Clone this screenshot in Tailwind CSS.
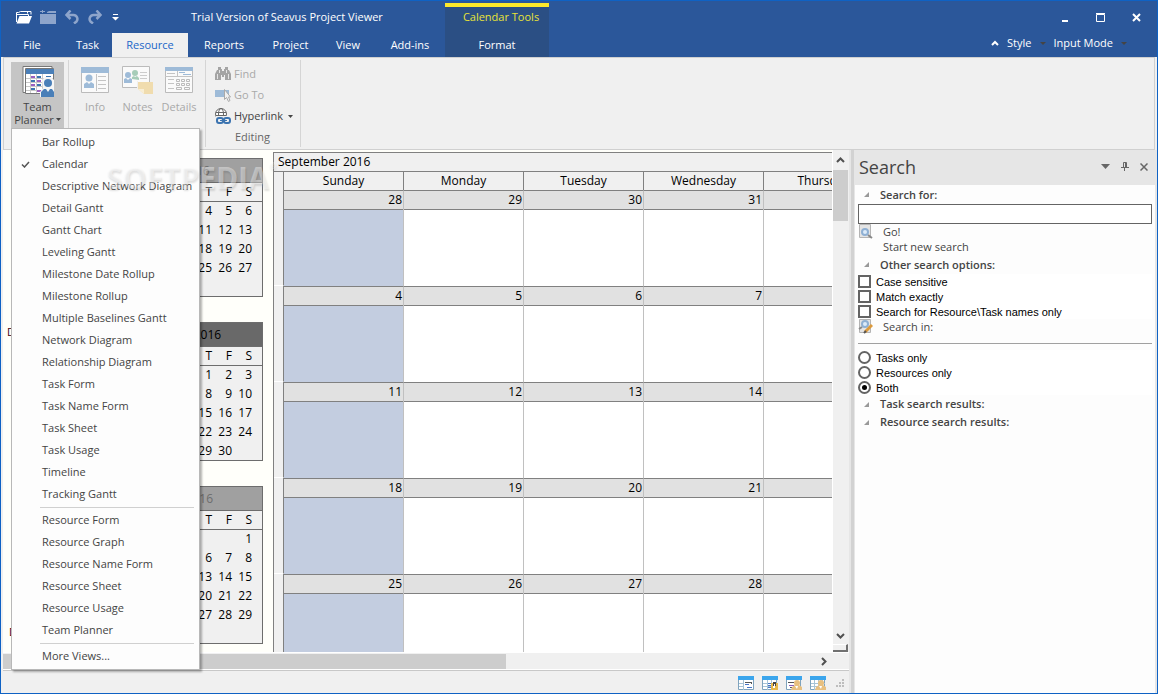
<!DOCTYPE html>
<html lang="en">
<head>
  <meta charset="UTF-8">
  <meta name="viewport" content="width=device-width, initial-scale=1.0">
  <title>Trial Version of Seavus Project Viewer</title>
  <script src="https://cdn.jsdelivr.net/npm/@tailwindcss/browser@4"></script>
</head>
<body class="h-screen flex flex-col overflow-hidden border border-[#0f62c4] bg-[#f0f0f0] font-['Open_Sans','Noto_Sans',sans-serif] text-[11px] leading-4 text-[#444]">

  <!-- Title bar and tabs -->
  <header class="flex h-14 shrink-0 bg-[#2b579a] text-white">
    <div class="flex flex-col w-[444px] shrink-0">
      <div class="flex items-center h-8">
        <div class="flex items-center w-[190px] pl-[15px] gap-2">
          <button aria-label="Open">
            <svg class="block" width="16" height="14" viewBox="0 0 16 14"><path d="M.5 12V2.500h2l2-1h7v2M.5 12V4.500h12v2M10 1.500h5v3" fill="none" stroke="#fff"/><path d="M3.500 6H16L13 13.500H.5z" fill="#fff"/></svg>
          </button>
          <button aria-label="Close file">
            <svg class="block" width="16" height="14" viewBox="0 0 16 14"><path d="M0 4h16v10H0zM7 2l2-1h7v2H7zM2 0h1v1h2v1H3v1H2V2H0V1h2z" fill="#8ea5cb"/></svg>
          </button>
          <button aria-label="Undo">
            <svg class="block" width="16" height="14" viewBox="0 0 16 14"><path d="M2 5h7.500a4 4 0 0 1 3 6.500L10 13.500M6.500 .5L2.500 5l4 4" fill="none" stroke="#8ea5cb" stroke-width="2.500"/></svg>
          </button>
          <button aria-label="Redo">
            <svg class="block" width="16" height="14" viewBox="0 0 16 14"><path d="M13 5H5.500a4 4 0 0 0-3 6.500L5 13.500M8.500 .5l4 4.500-4 4" fill="none" stroke="#8ea5cb" stroke-width="2.500"/></svg>
          </button>
          <button aria-label="Customize toolbar">
            <svg class="block" width="7" height="7" viewBox="0 0 7 7"><path d="M1 0h5v1H1zM0 3h7L3.500 6.500z" fill="#fff"/></svg>
          </button>
        </div>
        <h1>Trial Version of Seavus Project Viewer</h1>
      </div>
      <nav class="flex flex-1">
        <button class="w-[62px]">File</button>
        <button class="w-[49px]">Task</button>
        <button class="w-[76px] bg-[#f0f0f0] text-[#1a66c8]">Resource</button>
        <button class="w-[72px]">Reports</button>
        <button class="w-[61px]">Project</button>
        <button class="w-[54px]">View</button>
        <button class="w-[70px]">Add-ins</button>
      </nav>
    </div>
    <div class="flex flex-col justify-between w-[104px] shrink-0 mt-0.5 bg-[#2b4f84] border-t-4 border-[#fde92b]">
      <div class="h-5 pl-2 flex items-center justify-center text-[#e8e337]">Calendar Tools</div>
      <button class="h-6">Format</button>
    </div>
    <div class="flex flex-col flex-1">
      <div class="flex items-center justify-end h-8 pr-4 gap-[27px]">
        <button aria-label="Minimize"><svg class="block" width="9" height="9"><path d="M2 7h6v2H2z" fill="#fff"/></svg></button>
        <button aria-label="Maximize"><svg class="block" width="9" height="9"><path d="M.5 1.500h8v7h-8zM0 .5h9" fill="none" stroke="#fff"/></svg></button>
        <button aria-label="Close"><svg class="block" width="9" height="9"><path d="M1 1l7 7M8 1L1 8" stroke="#fff" stroke-width="2"/></svg></button>
      </div>
      <div class="flex items-center justify-end h-5 pr-[30px] gap-2">
        <button aria-label="Collapse ribbon"><svg class="block" width="8" height="6"><path d="M1 5l3-3 3 3" fill="none" stroke="#fff" stroke-width="2"/></svg></button>
        <button class="flex items-center gap-2">Style <svg width="6" height="3"><path d="M0 0h6L3 3z" fill="#444"/></svg></button>
        <button class="flex items-center gap-2">Input Mode <svg width="6" height="3"><path d="M0 0h6L3 3z" fill="#444"/></svg></button>
      </div>
    </div>
  </header>

  <!-- Ribbon -->
  <section class="flex h-[93px] shrink-0 mx-[2px] border border-[#d0d0d0] py-[2px]">
    <div class="relative w-[65px] pl-[7px] pt-[2px] border-r border-[#d5d5d5]">
      <button class="flex flex-col items-center w-[53px] h-[67px] pt-1 bg-[#c5c5c5] leading-[13px]">
        <svg class="block mb-[3px]" width="32" height="31" viewBox="0 0 32 31">
          <path d="M1 .5h29v26H1z" fill="#fff" stroke="#777"/>
          <path d="M3.500 2.500h28v25h-28z" fill="#fff" stroke="#777"/>
          <path d="M4 3h28v5H4z" fill="#4a7fb8"/>
          <path d="M4 12.500h27M4 16.500h27M4 20.500h27M4 24.500h27M8.500 8v19M14.500 8v19M20.500 8v19" stroke="#c8c8c8"/>
          <path d="M9 10h4v2H9zM15 14h4v2h-4zM9 18h4v2H9zM15 24h4v2h-4z" fill="#9a5fc0"/>
          <path d="M15 10h4v2h-4zM24 10h5v2h-5zM9 14h4v2H9zM15 18h4v2h-4zM9 22h4v2H9z" fill="#3c74b0"/>
          <path d="M20 14l3-3h6l3 3v17H18v-5l3-4z" fill="#f6f6f6"/>
          <circle cx="26" cy="17" r="4" fill="#4a7fb8"/>
          <path d="M19 31v-5l3-3h2l2 3 2-3h2l2 3v5z" fill="#4a7fb8"/>
        </svg>
        <span>Team</span>
        <span class="flex items-center gap-0.5">Planner <svg width="5" height="3"><path d="M0 0h5L2.500 3z" fill="#444"/></svg></span>
      </button>

      <!-- View list -->
      <div role="menu" class="absolute z-10 left-[7px] top-[68px] w-[189px] py-[2px] bg-[#fdfdfd] border border-[#b8b8b8] shadow-[2px_2px_2px_rgba(0,0,0,0.3)]">
        <button role="menuitem" class="block w-full h-[22px] pl-[30px] text-left whitespace-nowrap">Bar Rollup</button>
        <button role="menuitem" class="flex items-center w-full h-[22px] pl-[9px] text-left whitespace-nowrap"><svg class="mr-[12px]" width="9" height="7"><path d="M1 3.500l2.500 2.500L8 1" fill="none" stroke="#555" stroke-width="1.500"/></svg>Calendar</button>
        <button role="menuitem" class="block w-full h-[22px] pl-[30px] text-left whitespace-nowrap">Descriptive Network Diagram</button>
        <button role="menuitem" class="block w-full h-[22px] pl-[30px] text-left whitespace-nowrap">Detail Gantt</button>
        <button role="menuitem" class="block w-full h-[22px] pl-[30px] text-left whitespace-nowrap">Gantt Chart</button>
        <button role="menuitem" class="block w-full h-[22px] pl-[30px] text-left whitespace-nowrap">Leveling Gantt</button>
        <button role="menuitem" class="block w-full h-[22px] pl-[30px] text-left whitespace-nowrap">Milestone Date Rollup</button>
        <button role="menuitem" class="block w-full h-[22px] pl-[30px] text-left whitespace-nowrap">Milestone Rollup</button>
        <button role="menuitem" class="block w-full h-[22px] pl-[30px] text-left whitespace-nowrap">Multiple Baselines Gantt</button>
        <button role="menuitem" class="block w-full h-[22px] pl-[30px] text-left whitespace-nowrap">Network Diagram</button>
        <button role="menuitem" class="block w-full h-[22px] pl-[30px] text-left whitespace-nowrap">Relationship Diagram</button>
        <button role="menuitem" class="block w-full h-[22px] pl-[30px] text-left whitespace-nowrap">Task Form</button>
        <button role="menuitem" class="block w-full h-[22px] pl-[30px] text-left whitespace-nowrap">Task Name Form</button>
        <button role="menuitem" class="block w-full h-[22px] pl-[30px] text-left whitespace-nowrap">Task Sheet</button>
        <button role="menuitem" class="block w-full h-[22px] pl-[30px] text-left whitespace-nowrap">Task Usage</button>
        <button role="menuitem" class="block w-full h-[22px] pl-[30px] text-left whitespace-nowrap">Timeline</button>
        <button role="menuitem" class="block w-full h-[22px] pl-[30px] text-left whitespace-nowrap">Tracking Gantt</button>
        <hr class="ml-7 mr-[5px] mt-[2px] mb-[1px] border-[#d0d0d0]">
        <button role="menuitem" class="block w-full h-[22px] pl-[30px] text-left whitespace-nowrap">Resource Form</button>
        <button role="menuitem" class="block w-full h-[22px] pl-[30px] text-left whitespace-nowrap">Resource Graph</button>
        <button role="menuitem" class="block w-full h-[22px] pl-[30px] text-left whitespace-nowrap">Resource Name Form</button>
        <button role="menuitem" class="block w-full h-[22px] pl-[30px] text-left whitespace-nowrap">Resource Sheet</button>
        <button role="menuitem" class="block w-full h-[22px] pl-[30px] text-left whitespace-nowrap">Resource Usage</button>
        <button role="menuitem" class="block w-full h-[22px] pl-[30px] text-left whitespace-nowrap">Team Planner</button>
        <hr class="ml-7 mr-[5px] mt-[2px] mb-[1px] border-[#d0d0d0]">
        <button role="menuitem" class="block w-full h-[22px] pl-[30px] text-left whitespace-nowrap">More Views...</button>
      </div>

      <!-- Watermark -->
      <div class="absolute z-20 left-[102px] top-[98px] flex items-start pointer-events-none font-bold text-[30px] leading-10 text-white/40 [text-shadow:1px_2px_2px_rgba(0,0,0,0.12)]">SOFTPEDIA<span class="text-[9px] leading-4">®</span></div>
    </div>

    <div class="flex items-start w-[137px] pt-[6px] pl-[6px] border-r border-[#d5d5d5] text-[#a9a9a9]">
      <button class="flex flex-col items-center w-[40px] gap-[5px]" disabled>
        <svg class="block" width="28" height="28" viewBox="0 0 28 28">
          <path d="M.5 1.500h27v25H.5z" fill="#fafafa" stroke="#bbb"/><path d="M0 1h28v6H0z" fill="#9ebbd8"/>
          <circle cx="8" cy="12" r="3.500" fill="#9ebbd8"/><path d="M3 22v-4l3-2 2 2 2-2 3 2v4z" fill="#9ebbd8"/>
          <path d="M15.500 8v17M17 10.500h8M17 14.500h8M17 18.500h8M17 22.500h8" stroke="#c4c4c4"/>
        </svg>
        Info
      </button>
      <button class="flex flex-col items-center w-[45px] gap-[5px]" disabled>
        <svg class="block" width="31" height="28" viewBox="0 0 31 28">
          <path d="M.5 .5h27v21H.5z" fill="#fafafa" stroke="#bbb"/>
          <circle cx="6" cy="9" r="3" fill="#9ebbd8"/><path d="M2 17v-4l2-1 2 2 2-2 2 1v4z" fill="#9ebbd8"/>
          <circle cx="13" cy="7" r="3" fill="#a6cdb8"/><path d="M10 13v-2l2-1 1 1 2-1 2 2v2z" fill="#a6cdb8"/>
          <path d="M18 6.500h7M18 9.500h7M18 12.500h7" stroke="#ccc"/>
          <path d="M15 15h1v8h6v5h-6l-1-5z" fill="#f0f0f0"/>
          <path d="M16 16h15v12h-9l-6-5z" fill="#f0dcae"/><path d="M16 23h6v5z" fill="#f8eed4"/>
        </svg>
        Notes
      </button>
      <button class="flex flex-col items-center w-[38px] gap-[5px]" disabled>
        <svg class="block" width="28" height="28" viewBox="0 0 28 28">
          <path d="M.5 1.500h27v25H.5z" fill="#fafafa" stroke="#bbb"/><path d="M0 1h28v4H0z" fill="#9ebbd8"/>
          <path d="M0 10.500h28M12.500 5v5M2 7.500h8M3 13.500h6M3 17.500h6M3 22.500h6" stroke="#c4c4c4"/>
          <path d="M14 6.500h6M18 8.500h8" stroke="#9ebbd8"/>
          <path d="M11.500 13.500h3v2h-3zM16.500 13.500h3v2h-3zM21.500 13.500h3v2h-3zM11.500 17.500h3v2h-3zM16.500 17.500h3v2h-3zM21.500 17.500h3v2h-3zM11.500 21.500h5v2h-5zM19.500 21.500h5v2h-5z" fill="none" stroke="#bbb"/>
        </svg>
        Details
      </button>
    </div>

    <div class="flex flex-col w-[95px] pl-[9px] pt-[3px] border-r border-[#d5d5d5]">
      <button class="flex items-center h-[22px] gap-[3px] text-[#a9a9a9]" disabled>
        <svg width="16" height="14" viewBox="0 0 16 14"><path d="M3 0h3v2h1v2h2V2h1V0h3v3h1l2 4v6h-6V8H9v2H7V8H6v5H0V7l2-4h1z" fill="#a4a4a4"/><path d="M2.500 7v5M13.500 7v5M4.500 3v3M11.500 3v3" stroke="#e4e4e4"/></svg>
        Find
      </button>
      <button class="flex items-center h-[22px] gap-[3px] text-[#a9a9a9]" disabled>
        <svg width="16" height="14" viewBox="0 0 16 14"><path d="M0 2h14v7H0z" fill="#9ebbd8"/><path d="M9.500 1.500v10l2-2 2 4 1.500-1-1.500-3.500h2z" fill="#f0f0f0" stroke="#aaa"/></svg>
        Go To
      </button>
      <button class="flex items-center h-[22px] gap-[3px]">
        <svg width="16" height="16" viewBox="0 0 16 16"><circle cx="6" cy="6" r="5.500" fill="#fff" stroke="#666"/><ellipse cx="6" cy="6" rx="2.500" ry="5.500" fill="none" stroke="#666"/><path d="M1 4.500h10M1 7.500h10" stroke="#666"/><path d="M1 8h15v8H1z" fill="#f0f0f0"/><rect x="2" y="10" width="6" height="5" rx="2" fill="none" stroke="#3c74b0" stroke-width="2"/><rect x="9" y="10" width="6" height="5" rx="2" fill="none" stroke="#3c74b0" stroke-width="2"/><path d="M5 12.500h7" stroke="#3c74b0"/></svg>
        Hyperlink
        <svg class="ml-0.5" width="5" height="3"><path d="M0 0h5L2.500 3z" fill="#444"/></svg>
      </button>
      <span class="pl-5 leading-5 text-[#666]">Editing</span>
    </div>
  </section>

  <main class="flex flex-1 min-h-0">
    <div class="flex flex-col flex-1 min-w-0 pl-[2px]">
      <div class="flex flex-1 min-h-0 bg-[#fffffa]">
        <!-- Month navigator -->
        <div class="flex w-[270px] shrink-0 text-[12px] text-black overflow-hidden">
          <div class="flex flex-col w-[84px] pl-[4px] pt-[174px] gap-[284px] text-[11px] text-[#400010]"><span>D</span><span class="pl-[2px]">D</span></div>
          <div id="months" class="flex flex-col gap-[25px] pt-2"></div>
        </div>

        <!-- Calendar -->
        <div class="flex-1 min-w-0 mt-0.5 overflow-hidden border-l border-t border-[#808080] bg-white text-[12px] text-black">
          <div class="h-[19px] pl-1 leading-[18px] bg-[#f0f0f0] border-b border-[#808080]">September 2016</div>
          <table class="w-[850px] table-fixed border-separate border-spacing-0">
            <thead>
              <tr id="days" class="h-[18px] bg-[#f0f0f0]"></tr>
            </thead>
            <tbody id="weeks"></tbody>
          </table>
        </div>

        <!-- Vertical scrollbar -->
        <div class="flex flex-col items-center w-[17px] pr-px border-l border-white bg-[#f0f0f0]">
          <svg class="my-[7px] shrink-0" width="9" height="6"><path d="M1 5l3.500-3.500L8 5" fill="none" stroke="#505050" stroke-width="2"/></svg>
          <div class="w-full h-[51px] bg-[#cdcdcd]"></div>
          <div class="flex-1"></div>
          <svg class="mb-[5px] shrink-0" width="9" height="6"><path d="M1 1l3.500 3.500L8 1" fill="none" stroke="#505050" stroke-width="2"/></svg>
          <div class="w-full h-2 border-r-2 border-b-2 border-t border-t-white border-[#707070] bg-[#f0f0f0]"></div>
        </div>
      </div>
      <!-- Horizontal scrollbar -->
      <div class="flex items-center h-[18px] pr-[22px] border-y border-white">
        <div class="w-[503px] h-[15px] bg-[#cdcdcd]"></div>
        <div class="flex-1"></div>
        <svg width="6" height="9"><path d="M1 1l3.500 3.500L1 8" fill="none" stroke="#505050" stroke-width="2"/></svg>
      </div>
      <!-- Status bar -->
      <div class="flex items-center justify-end h-[23px] pr-[5px] pt-px border-t border-[#c8c8c8] gap-[8px]">
        <button aria-label="Gantt view"><svg class="block" width="16" height="14" viewBox="0 0 16 14"><path d="M.5.5h15v13H.5z" fill="#fff" stroke="#7fa3bd"/><path d="M0 0h16v4H0z" fill="#3ba5ec"/><path d="M1 7.500h4M1 10.500h4M5.500 4v10" stroke="#a8c4d6"/><path d="M7 6.500h7M13.500 6v2" stroke="#555"/><path d="M7 8.500h4M9 11.500h5" stroke="#4876c8"/></svg></button>
        <button aria-label="Task usage view"><svg class="block" width="16" height="14" viewBox="0 0 16 14"><path d="M.5.5h14v13H.5z" fill="#fff" stroke="#7fa3bd"/><path d="M0 0h16v4H0z" fill="#3ba5ec"/><path d="M1 7.500h14M1 10.500h14M5.500 4v10M9.500 4v10" stroke="#a8c4d6"/><path d="M6 7.500h4M6 9.500h3M6 11.500h3" stroke="#4876c8"/><path d="M9 7h7v7H9z" fill="#e8b84a"/><path d="M11 6h3v4h-3z" fill="#444"/><path d="M12 8h1v4h-2v-2h1z" fill="#fff"/></svg></button>
        <button aria-label="Team planner view"><svg class="block" width="16" height="14" viewBox="0 0 16 14"><path d="M.5.5h14v13H.5z" fill="#fff" stroke="#7fa3bd"/><path d="M0 0h16v4H0z" fill="#3ba5ec"/><path d="M2 6.500h6M4 11.500h4" stroke="#555"/><path d="M3 9.500h5" stroke="#8a5cc0"/><circle cx="11" cy="7" r="3" fill="#e8c080"/><path d="M5 14l1-3 3-2h4l3 2v3z" fill="#e8c080"/><path d="M9 10h3l-1 3z" fill="#fff"/></svg></button>
        <button aria-label="Resource sheet view"><svg class="block" width="16" height="14" viewBox="0 0 16 14"><path d="M.5.5h14v13H.5z" fill="#fff" stroke="#7fa3bd"/><path d="M0 0h16v4H0z" fill="#3ba5ec"/><path d="M1 7.500h14M1 10.500h14M4.500 4v10M8.500 4v10M12.500 4v10" stroke="#a8c4d6"/><circle cx="11" cy="7" r="3" fill="#e8c080"/><path d="M5 14l1-3 3-2h4l3 2v3z" fill="#e8c080"/><path d="M9 10h3l-1 3z" fill="#fff"/></svg></button>
        <svg class="ml-0.5" width="8" height="8"><path d="M6 0h2v2H6zM3 3h2v2H3zM6 3h2v2H6zM0 6h2v2H0zM3 6h2v2H3zM6 6h2v2H6z" fill="#bdbdbd"/></svg>
      </div>
    </div>

    <!-- Search pane -->
    <aside class="flex flex-col w-[308px] shrink-0 bg-[#fdfdfd] border-r-2 border-[#e6e6e6] shadow-[inset_2px_0_#e6e6e6,inset_5px_0_#d2d2d2,inset_6px_0_#e6e6e6] pl-[6px]">
      <div class="flex items-center h-[35px] pl-1 pr-[7px] pb-0.5 gap-[11px] bg-[#e6e6e6]">
        <h2 class="flex-1 text-[18px] leading-6">Search</h2>
        <button aria-label="Pane options"><svg class="block" width="9" height="5"><path d="M0 0h9L4.500 5z" fill="#666"/></svg></button>
        <button aria-label="Pin"><svg class="block" width="8" height="9"><path d="M2.500 5V.5h3V5M4.500 0v5M0 5.500h8M3.500 6v3" fill="none" stroke="#666"/></svg></button>
        <button aria-label="Close pane"><svg class="block" width="8" height="8"><path d="M.5.5l7 7M7.500.5l-7 7" stroke="#666" stroke-width="1.500"/></svg></button>
      </div>
      <div class="flex flex-col px-[3px]">
        <label for="query" class="flex items-center h-[19px] pl-[6px] gap-[11px] font-semibold"><svg width="5" height="5"><path d="M5 0v5H0z" fill="#999"/></svg>Search for:</label>
        <input id="query" type="text" class="h-5 px-1 border border-[#646464] bg-white">
        <button class="flex items-center h-[15px] text-left"><svg class="mr-[10px]" width="15" height="15" viewBox="0 0 15 15"><path d="M1.500.5h11v13h-11z" fill="#e4e4e4" stroke="#b4b4b4"/><circle cx="7" cy="8" r="3" fill="#dcebfa" stroke="#8fb0d4" stroke-width="2"/><path d="M10 11l4 3" stroke="#888" stroke-width="2"/></svg>Go!</button>
        <button class="h-4 pl-[25px] text-left">Start new search</button>
        <div class="flex items-center h-[19px] pl-[6px] gap-[11px] font-semibold"><svg width="5" height="5"><path d="M5 0v5H0z" fill="#999"/></svg>Other search options:</div>
        <label class="flex items-center h-[15px] gap-[5px] bg-white font-['Liberation_Sans',Arial,sans-serif] text-black"><input type="checkbox" class="appearance-none size-[13px] border-2 border-[#646464] bg-white">Case sensitive</label>
        <label class="flex items-center h-[15px] gap-[5px] bg-white font-['Liberation_Sans',Arial,sans-serif] text-black"><input type="checkbox" class="appearance-none size-[13px] border-2 border-[#646464] bg-white">Match exactly</label>
        <label class="flex items-center h-[15px] gap-[5px] bg-white font-['Liberation_Sans',Arial,sans-serif] text-black"><input type="checkbox" class="appearance-none size-[13px] border-2 border-[#646464] bg-white">Search for Resource\Task names only</label>
        <button class="flex items-center h-[15px] text-left"><svg class="mr-[10px]" width="15" height="15" viewBox="0 0 15 15"><path d="M1.500.5h11v13h-11z" fill="#e4e4e4" stroke="#b4b4b4"/><circle cx="7" cy="5" r="3" fill="#dcebfa" stroke="#8fb0d4" stroke-width="2"/><path d="M1 10l3-2" stroke="#888" stroke-width="2"/><path d="M14 6l-7 7" stroke="#dc9a3c" stroke-width="3"/><path d="M8 12l-2 2" stroke="#555" stroke-width="2"/></svg>Search in:</button>
        <hr class="mt-[9px] mb-[6px] border-[#a0a0a0]">
        <label class="flex items-center h-[15px] gap-[5px] bg-white font-['Liberation_Sans',Arial,sans-serif] text-black"><input type="radio" name="scope" class="appearance-none size-[13px] border-2 border-[#646464] rounded-full bg-white">Tasks only</label>
        <label class="flex items-center h-[15px] gap-[5px] bg-white font-['Liberation_Sans',Arial,sans-serif] text-black"><input type="radio" name="scope" class="appearance-none size-[13px] border-2 border-[#646464] rounded-full bg-white">Resources only</label>
        <label class="flex items-center h-[15px] gap-[5px] bg-white font-['Liberation_Sans',Arial,sans-serif] text-black"><input type="radio" name="scope" checked class="appearance-none size-[13px] border-2 border-[#646464] rounded-full bg-white checked:bg-black checked:bg-clip-content checked:p-[2px]">Both</label>
        <div class="flex items-center h-[18px] pl-[6px] gap-[11px] font-semibold"><svg width="5" height="5"><path d="M5 0v5H0z" fill="#999"/></svg>Task search results:</div>
        <div class="flex items-center h-[18px] pl-[6px] gap-[11px] font-semibold"><svg width="5" height="5"><path d="M5 0v5H0z" fill="#999"/></svg>Resource search results:</div>
      </div>
    </aside>
  </main>

  <script>
    // Month navigator: start is the weekday of the first day
    const months = [
      { name: 'August 2016', start: 1, days: 31, head: 'h-6 bg-[#a0a0a0] text-[#6d6d6d]' },
      { name: 'September 2016', start: 4, days: 30, head: 'h-6 bg-[#696969] text-black' },
      { name: 'October 2016', start: 6, days: 31, head: 'h-6 bg-[#a0a0a0] text-[#6d6d6d]' }
    ];
    const box = document.getElementById('months');

    months.forEach(m => {
      let rows = '';
      for (let first = 1 - m.start; first <= m.days; first += 7) {
        rows += '<tr class="h-[19px]"><td></td>';
        for (let d = first; d < first + 7; d++) {
          rows += `<td class="p-0 text-right">${d > 0 && d <= m.days ? d : ''}</td>`;
        }
        rows += '<td></td></tr>';
      }
      const div = document.createElement('div');
      div.className = 'w-[176px] border border-[#6d6d6d] bg-[#f0f0f0]';
      div.innerHTML = `
        <div class="${m.head} flex items-center justify-center border-b border-[#6d6d6d]">${m.name}</div>
        <table class="w-full table-fixed border-collapse">
          <thead><tr class="h-[18px] shadow-[0_1px_#6d6d6d]">
            <th></th>${['S', 'M', 'T', 'W', 'T', 'F', 'S'].map(d => `<th class="w-5 p-0 text-right font-normal">${d}</th>`).join('')}<th class="w-[10px]"></th>
          </tr></thead>
          <tbody>${rows}</tbody>
        </table>`;
      box.appendChild(div);
    });

    // Main calendar
    const names = ['Sunday', 'Monday', 'Tuesday', 'Wednesday', 'Thursday', 'Friday', 'Saturday'];
    document.getElementById('days').innerHTML = '<th class="w-[10px] border-r border-[#808080]"></th>' +
      names.map(n => `<th class="w-[120px] p-0 font-normal leading-[18px] border-r border-[#808080]">${n}</th>`).join('');

    let weeks = '';
    for (let w = 0; w < 5; w++) {
      weeks += '<tr class="h-24 align-top"><td class="bg-[#f0f0f0] border-r border-r-[#808080] border-b border-b-white"></td>';
      for (let i = 0; i < 7; i++) {
        const date = new Date(2016, 7, 28 + w * 7 + i).getDate();
        const fill = i === 0 ? 'bg-[#c3cde0]' : 'bg-white';
        weeks += `<td class="${fill} p-0 border-t border-t-[#808080] border-r border-r-[#c0c0c0]">
          <div class="h-[19px] pr-px leading-[18px] text-right bg-[#e1e1e1] border-b border-[#808080]">${date}</div></td>`;
      }
      weeks += '</tr>';
    }
    document.getElementById('weeks').innerHTML = weeks;
  </script>
</body>
</html>
